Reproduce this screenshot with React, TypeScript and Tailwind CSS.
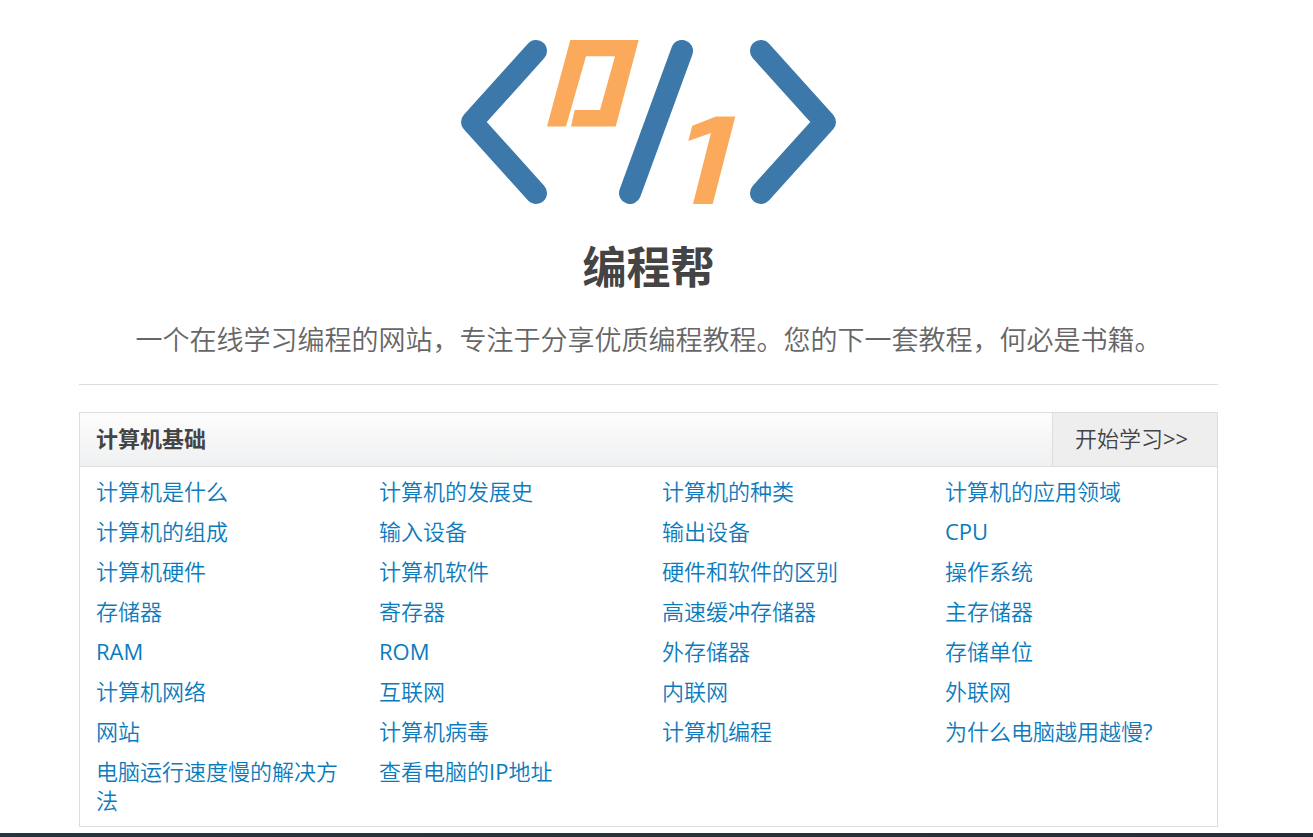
const topics = [
  "计算机是什么", "计算机的发展史", "计算机的种类", "计算机的应用领域",
  "计算机的组成", "输入设备", "输出设备", "CPU",
  "计算机硬件", "计算机软件", "硬件和软件的区别", "操作系统",
  "存储器", "寄存器", "高速缓冲存储器", "主存储器",
  "RAM", "ROM", "外存储器", "存储单位",
  "计算机网络", "互联网", "内联网", "外联网",
  "网站", "计算机病毒", "计算机编程", "为什么电脑越用越慢?",
  "电脑运行速度慢的解决方法", "查看电脑的IP地址",
];

function Logo() {
  return (
    <svg viewBox="461 40 375 164" className="mx-auto h-[164px] w-[375px]" aria-hidden="true">
      <g fill="none" stroke="#3d78aa" strokeWidth="22" strokeLinecap="round" strokeLinejoin="round">
        <path d="M536 51L472 122L536 193" />
        <path d="M682 51L630 193" />
        <path d="M761 51L825 122L761 193" />
      </g>
      <g fill="#fba95b">
        <path d="M570.3 40H638.7L615.7 126.5H571L574.7 110H600L615 56.3H586L566 126.5H547Z" />
        <path d="M716 116.5H735.3L712.7 204H693L711 133L688.3 141L692.3 125.7Z" />
      </g>
    </svg>
  );
}

// Latin runs take the regular weight, so that they are as dark as the Chinese beside them.
function Mixed({ text }: { text: string }) {
  return text
    .split(/([A-Za-z?>]+)/)
    .map((part, i) => (i % 2 ? <span key={i} className="font-normal">{part}</span> : part));
}

export default function App() {
  return (
    <div className="bg-white font-['Open_Sans','Noto_Sans_CJK_SC',sans-serif] text-[22px] leading-[29px] font-[350] text-[#444]">
      <main className="pt-10 pr-[95px] pl-[79px]">
        <header className="border-b border-[#ddd] pb-6 text-center">
          <Logo />
          <h1 className="mt-[31px] text-[44px] leading-[64px] font-bold">编程帮</h1>
          <p className="mt-[21px] text-[27px] leading-10 text-[#666]">
            一个在线学习编程的网站，专注于分享优质编程教程。您的下一套教程，何必是书籍。
          </p>
        </header>
        <section className="mt-[27px] border border-[#ddd]">
          <div className="flex h-[54px] items-stretch justify-between border-b border-[#ddd] bg-linear-to-b from-[#fdfdfd] to-[#eff0f1]">
            <h2 className="flex items-center pb-0.5 pl-4 font-bold">计算机基础</h2>
            <a href="#start" className="flex w-[165px] items-center border-l border-[#ddd] bg-[#eee] pb-0.5 pl-[22px]">
              <Mixed text="开始学习>>" />
            </a>
          </div>
          <ul className="grid grid-cols-4 gap-x-[29px] gap-y-[11px] pt-[10px] pr-[18px] pb-[11px] pl-4">
            {topics.map((topic) => (
              <li key={topic}>
                <a href="#topic" className="text-[#0b7bbd]">
                  <Mixed text={topic} />
                </a>
              </li>
            ))}
          </ul>
        </section>
      </main>
      <footer className="mt-[6px] h-1 bg-linear-to-r from-[#233442] via-[#26343a] to-[#222d3a]" />
    </div>
  );
}
